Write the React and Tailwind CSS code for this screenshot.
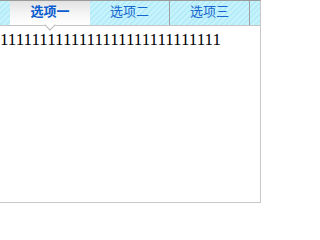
import React from 'react';

const tabs = ['选项一', '选项二', '选项三'];

export default function App() {
    return (
        <div className="w-[261px] h-[203px] border-t border-t-[#9a9a9a] border-r border-b border-r-[#c8c8c8] border-b-[#c8c8c8] bg-white">
            <div className="flex h-[25px] pl-[10px] border-b border-[#c4c4c4] bg-[repeating-linear-gradient(135deg,#b4ecf9_0px,#b4ecf9_2px,#c9f3fc_2px,#c9f3fc_4px)]">
                {tabs.map((t, i) =>
                    i === 0 ? (
                        <div
                            key={t}
                            className="relative w-[80px] flex justify-center pt-[2px] bg-[linear-gradient(#e2e2e2,#f6f6f6_55%,#ffffff)] text-[13px] leading-[16px] font-bold text-[#0a5ccf] font-['Noto_Sans_CJK_SC',sans-serif]"
                        >
                            {t}
                            <span className="absolute left-[36px] top-[20px] w-[8px] h-[8px] rotate-45 bg-white border-r border-b border-[#b8b8b8]" />
                        </div>
                    ) : (
                        <div
                            key={t}
                            className="w-[80px] flex justify-center pt-[2px] border-r border-[#a0a0a0] text-[13px] leading-[16px] text-[#1566d0] font-['Noto_Sans_CJK_SC',sans-serif]"
                        >
                            {t}
                        </div>
                    )
                )}
            </div>
            <p className="pt-[4px] text-[17px] leading-[19px] text-black font-['Liberation_Serif',serif]">
                {'1'.repeat(28)}
            </p>
        </div>
    );
}
